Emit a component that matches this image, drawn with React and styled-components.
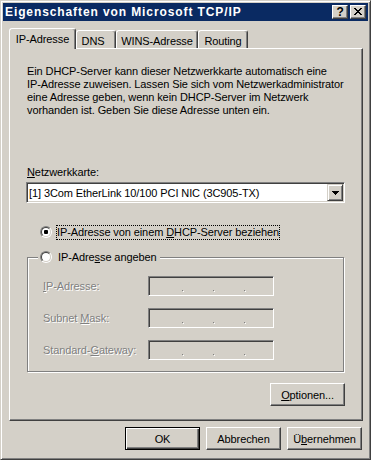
import React from 'react'
import styled, { createGlobalStyle } from 'styled-components'

const face = '#d4d0c8'
const shadow = '#808080'
const dark = '#404040'

const GlobalStyle = createGlobalStyle`
  html, body {
    margin: 0;
    padding: 0;
    background: ${face};
  }
  body {
    font-family: "Liberation Sans", Arial, sans-serif;
    font-size: 11px;
    letter-spacing: -0.1px;
    color: #000;
  }
  * {
    box-sizing: border-box;
  }
`

const Window = styled.div`
  width: 371px;
  height: 460px;
  background: ${face};
  border: 1px solid;
  border-color: ${face} ${dark} ${dark} ${face};
  box-shadow: inset 1px 1px #fff, inset -1px -1px ${shadow};
  padding: 2px;
  display: flex;
  flex-direction: column;
`

const TitleBar = styled.div`
  height: 18px;
  background: #0a2a62;
  color: #fff;
  display: flex;
  align-items: center;
  padding: 0 2px 0 2px;
`

const TitleText = styled.div`
  font-weight: bold;
  font-size: 12px;
  letter-spacing: 0.9px;
  white-space: nowrap;
`

const TitleButtons = styled.div`
  margin-left: auto;
  display: flex;
  gap: 2px;
`

const TitleButton = styled.div`
  width: 16px;
  height: 14px;
  background: ${face};
  border: 1px solid;
  border-color: #fff ${dark} ${dark} #fff;
  box-shadow: inset -1px -1px ${shadow};
  display: flex;
  align-items: center;
  justify-content: center;
  color: #000;
  font-weight: bold;
  font-size: 12px;
  line-height: 12px;
  padding-bottom: 1px;
`

const Body = styled.div`
  flex: 1;
  display: flex;
  flex-direction: column;
  padding: 7px 5px 0 6px;
`

const TabStrip = styled.div`
  height: 20px;
  display: flex;
  align-items: flex-end;
`

const Tab = styled.div`
  position: relative;
  z-index: ${p => (p.$active ? 2 : 1)};
  width: ${p => p.$w}px;
  height: ${p => (p.$active ? 21 : 18)}px;
  margin-bottom: ${p => (p.$active ? -1 : 0)}px;
  background: ${face};
  border: 1px solid;
  border-bottom: none;
  border-color: #fff ${dark} transparent #fff;
  border-radius: 3px 3px 0 0;
  box-shadow: inset -1px 0 ${shadow};
  display: flex;
  align-items: center;
  justify-content: center;
  padding-top: ${p => (p.$active ? 0 : 3)}px;
  padding-right: ${p => p.$shift || 0}px;
  white-space: nowrap;
`

const Panel = styled.div`
  height: 373px;
  background: ${face};
  border: 1px solid;
  border-color: #fff ${dark} ${dark} #fff;
  box-shadow: inset -1px -1px ${shadow};
  padding: 16px 17px 0 16px;
  display: flex;
  flex-direction: column;
  align-items: stretch;
`

const Intro = styled.p`
  margin: 0;
  padding-left: 1px;
  line-height: 13px;
  white-space: nowrap;
`

const Label = styled.div`
  margin-top: 49px;
  padding-left: 1px;
  line-height: 13px;
`

const U = styled.span`
  text-decoration: underline;
  text-underline-offset: 1px;
`

const Combo = styled.div`
  margin-top: 3px;
  height: 21px;
  display: flex;
  background: #fff;
  border: 1px solid;
  border-color: ${shadow} #fff #fff ${shadow};
  box-shadow: inset 1px 1px ${dark}, inset -1px -1px ${face};
  padding: 1px;
`

const ComboText = styled.div`
  flex: 1;
  display: flex;
  align-items: center;
  padding-left: 1px;
  white-space: nowrap;
`

const DropButton = styled.div`
  width: 16px;
  background: ${face};
  border: 1px solid;
  border-color: ${face} ${dark} ${dark} ${face};
  box-shadow: inset 1px 1px #fff, inset -1px -1px ${shadow};
  display: flex;
  align-items: center;
  justify-content: center;
`

const ChoiceRow = styled.div`
  margin-top: 21px;
  padding-left: 14px;
  height: 16px;
  display: flex;
  justify-content: flex-start;
  align-items: center;
  gap: 4px;
`

const LegendRow = styled.div`
  height: 16px;
  display: flex;
  align-items: center;
  gap: 5px;
`

const Radio = styled.span`
  position: relative;
  width: 12px;
  height: 12px;
  flex: none;
  border-radius: 50%;
  border: 1px solid;
  border-color: ${shadow} #fff #fff ${shadow};
  &::before {
    content: '';
    position: absolute;
    inset: 0;
    border-radius: 50%;
    border: 1px solid;
    border-color: ${dark} ${face} ${face} ${dark};
    background: #fff;
  }
  &::after {
    content: '';
    display: ${p => (p.$checked ? 'block' : 'none')};
    position: absolute;
    left: 3px;
    top: 3px;
    width: 4px;
    height: 4px;
    border-radius: 1px;
    background: #000;
  }
`

const RadioLabel = styled.span`
  flex: none;
  border: 1px dotted ${p => (p.$focus ? '#000' : 'transparent')};
  line-height: 13px;
  white-space: nowrap;
`

const Group = styled.fieldset`
  margin: 9px 0 0 1px;
  padding: 0;
  width: 317px;
  border: 1px solid ${shadow};
  box-shadow: inset 1px 1px #fff, 1px 1px #fff;
`

const Legend = styled.legend`
  margin-left: 10px;
  padding: 0 2px;
  background: ${face};
`

const Fields = styled.div`
  display: flex;
  flex-direction: column;
  gap: 12px;
  padding: 11px 0 11px 15px;
`

const FieldRow = styled.div`
  height: 20px;
  display: flex;
  align-items: center;
`

const FieldLabel = styled.span`
  width: 105px;
  color: ${shadow};
  text-shadow: 1px 1px 0 #fff;
  white-space: nowrap;
`

const IpField = styled.div`
  width: 126px;
  height: 20px;
  background: ${face};
  border: 1px solid;
  border-color: ${shadow} #fff #fff ${shadow};
  box-shadow: inset 1px 1px ${dark}, inset -1px -1px ${face};
  display: flex;
  align-items: center;
  padding: 8px 0 0 33px;
  gap: 30px;
`

const Dot = styled.span`
  width: 1px;
  height: 1px;
  background: ${shadow};
  box-shadow: 1px 1px #fff;
`

const OptionsRow = styled.div`
  margin-top: 11px;
  display: flex;
  justify-content: flex-end;
`

const Button = styled.div`
  width: 75px;
  height: 23px;
  background: ${face};
  border: 1px solid;
  border-color: ${p => (p.$default ? '#000' : `#fff ${dark} ${dark} #fff`)};
  box-shadow: ${p =>
    p.$default
      ? `inset 1px 1px #fff, inset -1px -1px ${dark}, inset -2px -2px ${shadow}`
      : `inset -1px -1px ${shadow}`};
  display: flex;
  align-items: center;
  justify-content: center;
  white-space: nowrap;
`

const ButtonRow = styled.div`
  margin-top: 6px;
  margin-right: 1px;
  display: flex;
  justify-content: flex-end;
  gap: 6px;
`

function CloseGlyph() {
  const px = [
    [0, 0], [1, 0], [6, 0], [7, 0],
    [1, 1], [2, 1], [5, 1], [6, 1],
    [2, 2], [3, 2], [4, 2], [5, 2],
    [3, 3], [4, 3],
    [2, 4], [3, 4], [4, 4], [5, 4],
    [1, 5], [2, 5], [5, 5], [6, 5],
    [0, 6], [1, 6], [6, 6], [7, 6],
  ]
  return (
    <svg width="8" height="7" viewBox="0 0 8 7" shapeRendering="crispEdges">
      {px.map(([x, y]) => (
        <rect key={x + '-' + y} x={x} y={y} width="1" height="1" fill="#000" />
      ))}
    </svg>
  )
}

function Arrow() {
  return (
    <svg width="7" height="4" viewBox="0 0 7 4" shapeRendering="crispEdges">
      <rect x="0" y="0" width="7" height="1" fill="#000" />
      <rect x="1" y="1" width="5" height="1" fill="#000" />
      <rect x="2" y="2" width="3" height="1" fill="#000" />
      <rect x="3" y="3" width="1" height="1" fill="#000" />
    </svg>
  )
}

const fields = [
  { key: 'ip', label: <><U>I</U>P-Adresse:</> },
  { key: 'mask', label: <>Subnet <U>M</U>ask:</> },
  { key: 'gw', label: <>Standard-<U>G</U>ateway:</> },
]

export default function App() {
  return (
    <>
      <GlobalStyle />
      <Window>
        <TitleBar>
          <TitleText>Eigenschaften von Microsoft TCP/IP</TitleText>
          <TitleButtons>
            <TitleButton>?</TitleButton>
            <TitleButton><CloseGlyph /></TitleButton>
          </TitleButtons>
        </TitleBar>
        <Body>
          <TabStrip>
            <Tab $active $w={67}>IP-Adresse</Tab>
            <Tab $w={40} $shift={6}>DNS</Tab>
            <Tab $w={82}>WINS-Adresse</Tab>
            <Tab $w={50}>Routing</Tab>
          </TabStrip>
          <Panel>
            <Intro>
              Ein DHCP-Server kann dieser Netzwerkkarte automatisch eine<br />
              IP-Adresse zuweisen. Lassen Sie sich vom Netzwerkadministrator<br />
              eine Adresse geben, wenn kein DHCP-Server im Netzwerk<br />
              vorhanden ist. Geben Sie diese Adresse unten ein.
            </Intro>
            <Label><U>N</U>etzwerkkarte:</Label>
            <Combo>
              <ComboText>[1] 3Com EtherLink 10/100 PCI NIC (3C905-TX)</ComboText>
              <DropButton><Arrow /></DropButton>
            </Combo>
            <ChoiceRow>
              <Radio $checked />
              <RadioLabel $focus>IP-Adresse von einem <U>D</U>HCP-Server beziehen</RadioLabel>
            </ChoiceRow>
            <Group>
              <Legend>
                <LegendRow>
                  <Radio />
                  <RadioLabel>IP-Adre<U>s</U>se angeben</RadioLabel>
                </LegendRow>
              </Legend>
              <Fields>
                {fields.map(f => (
                  <FieldRow key={f.key}>
                    <FieldLabel>{f.label}</FieldLabel>
                    <IpField>
                      <Dot />
                      <Dot />
                      <Dot />
                    </IpField>
                  </FieldRow>
                ))}
              </Fields>
            </Group>
            <OptionsRow>
              <Button><U>O</U>ptionen...</Button>
            </OptionsRow>
          </Panel>
          <ButtonRow>
            <Button $default>OK</Button>
            <Button>Abbrechen</Button>
            <Button>Ü<U>b</U>ernehmen</Button>
          </ButtonRow>
        </Body>
      </Window>
    </>
  )
}
